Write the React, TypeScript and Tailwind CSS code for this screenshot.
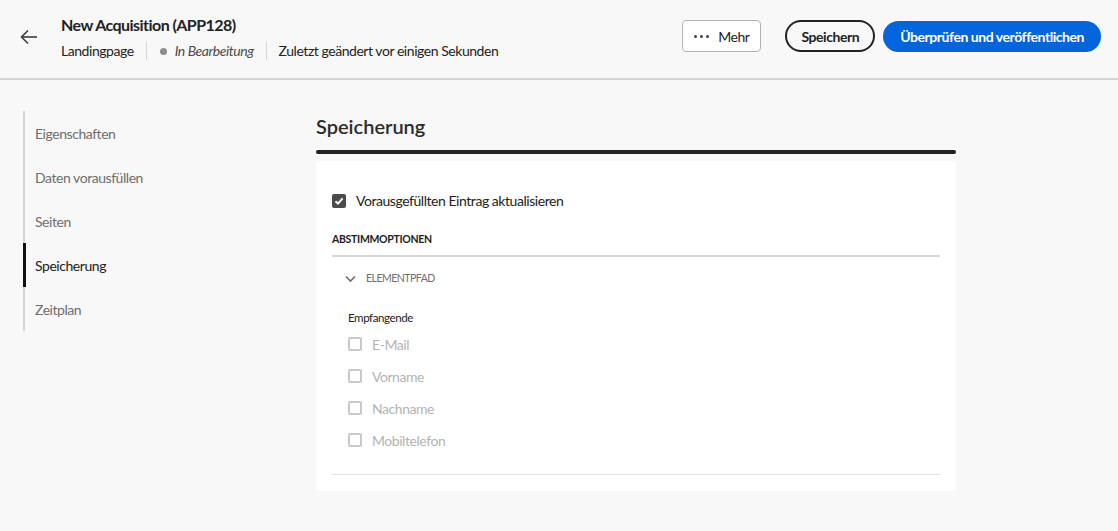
import { useState } from "react";

const NAV = ["Eigenschaften", "Daten vorausfüllen", "Seiten", "Speicherung", "Zeitplan"];
const FIELDS = ["E-Mail", "Vorname", "Nachname", "Mobiltelefon"];

function ArrowLeft() {
  return (
    <svg width="20" height="20" viewBox="0 0 20 20" fill="none" stroke="#3a3a3a" strokeWidth="1.6">
      <path d="M18 10H2.5" />
      <path d="M9 3.5L2.5 10L9 16.5" />
    </svg>
  );
}

function Check() {
  return (
    <svg width="10" height="10" viewBox="0 0 10 10" fill="none" stroke="white" strokeWidth="2">
      <path d="M1.5 5.2L4 7.6L8.6 2.4" />
    </svg>
  );
}

export default function App() {
  const [update, setUpdate] = useState(true);
  const active = "Speicherung";

  return (
    <div className="min-h-[531px] bg-[#f8f8f8] text-[#222] tracking-[-0.45px] font-['Lato','Liberation_Sans',sans-serif]">
      {/* Header */}
      <header className="h-[80px] border-b-2 border-[#d5d5d5] flex items-center pl-[18px] pr-[17px]">
        <button className="w-[22px] h-[22px] flex items-center justify-center mr-[21px] mt-[-4px]">
          <ArrowLeft />
        </button>
        <div className="flex-1 mt-[-2px]">
          <h1 className="text-[16px] font-bold leading-[20px] tracking-[-0.55px]">New Acquisition (APP128)</h1>
          <div className="flex items-center text-[14px] leading-[20px] mt-[6px]">
            <span>Landingpage</span>
            <span className="w-px h-[18px] bg-[#d5d5d5] mx-[12px]" />
            <span className="w-[7px] h-[7px] rounded-full bg-[#8e8e8e] mr-[8px] ml-[1px]" />
            <span className="italic text-[#4b4b4b]">In Bearbeitung</span>
            <span className="w-px h-[18px] bg-[#d5d5d5] mx-[12px]" />
            <span>Zuletzt geändert vor einigen Sekunden</span>
          </div>
        </div>
        <div className="flex items-center mt-[-6px]">
          <button className="h-[32px] px-[11px] flex items-center gap-[9px] border border-[#b3b3b3] rounded-[4px] bg-white text-[14px]">
            <span className="flex gap-[3px]">
              <span className="w-[3px] h-[3px] rounded-full bg-[#444]" />
              <span className="w-[3px] h-[3px] rounded-full bg-[#444]" />
              <span className="w-[3px] h-[3px] rounded-full bg-[#444]" />
            </span>
            Mehr
          </button>
          <button className="h-[32px] ml-[24px] px-[14px] border-2 border-[#222] rounded-full text-[14px] font-bold">
            Speichern
          </button>
          <button className="h-[31px] ml-[8px] px-[17px] rounded-full bg-[#0265dc] text-white text-[14px] font-bold">
            Überprüfen und veröffentlichen
          </button>
        </div>
      </header>

      <div className="flex pt-[31px]">
        {/* Side nav */}
        <nav className="w-[316px] pl-[23px] shrink-0">
          <ul className="border-l-2 border-[#d5d5d5]">
            {NAV.map((n) => (
              <li
                key={n}
                className={
                  "h-[44px] flex items-center pl-[9px] -ml-[2px] border-l-[3px] text-[14px] " +
                  (n === active ? "border-[#111] text-[#222]" : "border-transparent text-[#6e6e6e]")
                }
              >
                {n}
              </li>
            ))}
          </ul>
        </nav>

        {/* Main */}
        <main className="w-[640px]">
          <h2 className="text-[20px] leading-[28px] font-semibold text-[#2c2c2c] mt-[1px] tracking-normal">Speicherung</h2>
          <div className="h-[4px] bg-[#222] rounded-[2px] mt-[10px]" />
          <section className="bg-white rounded-[4px] mt-[7px] px-[16px] pt-[29px] pb-[16px]">
            <label className="flex items-center gap-[10px] text-[14px] cursor-pointer">
              <button
                onClick={() => setUpdate(!update)}
                className={
                  "w-[14px] h-[14px] rounded-[2px] flex items-center justify-center " +
                  (update ? "bg-[#4b4b4b]" : "border-2 border-[#6e6e6e]")
                }
              >
                {update && <Check />}
              </button>
              Vorausgefüllten Eintrag aktualisieren
            </label>

            <h3 className="text-[10.5px] font-bold tracking-[-0.3px] mt-[20px] leading-[16px]">ABSTIMMOPTIONEN</h3>
            <div className="h-[2px] bg-[#d8d8d8] mt-[8px]" />

            <div className="flex items-center pl-[13px] mt-[14px] h-[16px]">
              <svg width="11" height="8" viewBox="0 0 11 8" fill="none" stroke="#6e6e6e" strokeWidth="1.6">
                <path d="M1 1.5L5.5 6L10 1.5" />
              </svg>
              <span className="ml-[10px] text-[10.5px] tracking-[-0.5px] text-[#6e6e6e]">ELEMENTPFAD</span>
            </div>

            <div className="pl-[16px] mt-[23px]">
              <p className="text-[11.5px] tracking-[-0.4px] leading-[16px]">Empfangende</p>
              <div className="mt-[2px]">
                {FIELDS.map((f) => (
                  <div key={f} className="h-[32px] flex items-center gap-[10px]">
                    <span className="w-[14px] h-[14px] rounded-[2px] border-2 border-[#c8c8c8]" />
                    <span className="text-[14px] text-[#b3b3b3]">{f}</span>
                  </div>
                ))}
              </div>
            </div>

            <div className="h-px bg-[#e1e1e1] mt-[18px]" />
          </section>
        </main>
      </div>
    </div>
  );
}
